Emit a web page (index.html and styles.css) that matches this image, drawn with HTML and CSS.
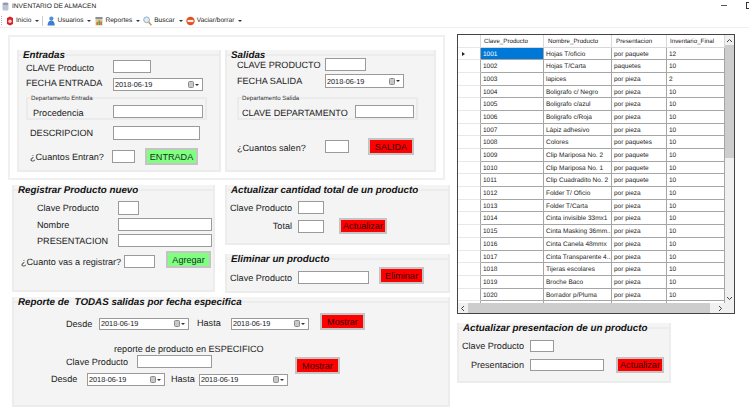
FILE: index.html
```html
<!DOCTYPE html>
<html lang="en">
<head>
<meta charset="UTF-8">
<meta name="viewport" content="width=device-width, initial-scale=1.0">
<title>INVENTARIO DE ALMACEN</title>
<link rel="stylesheet" href="styles.css">
</head>
<body>
<div class="titlebar">
    <svg class="app-icon" width="7" height="9" viewBox="0 0 7 9"><rect x="0.5" y="1" width="6" height="7.5" rx="1.5" fill="#b9c2d4"/><ellipse cx="3.5" cy="1.8" rx="3" ry="1.3" fill="#8d99b3"/></svg>
    <span class="app-name">INVENTARIO DE ALMACEN</span>
    <span class="win-min"></span>
    <span class="win-max"></span>
</div>
<div class="toolbar">
    <span class="grip"></span>
    <div class="tool tool-inicio">
        <svg width="8" height="10" viewBox="0 0 8 10"><path d="M1 2 L4 0.5 L7 2 V8 L4 9.5 L1 8 Z" fill="#d8222a"/><circle cx="4" cy="5.2" r="1.7" fill="#f7c9c9"/></svg>
        <span>Inicio</span><i class="caret"></i>
    </div>
    <span class="tool-sep"></span>
    <div class="tool tool-usuarios">
        <svg width="8" height="10" viewBox="0 0 8 10"><circle cx="4.4" cy="2.5" r="2.1" fill="#4f8fdc"/><path d="M0.5 9.5 C0.8 5.5 2.5 4.5 4.4 4.5 C6.3 4.5 7.6 6 7.8 9.5 Z" fill="#3f7fd0"/></svg>
        <span>Usuarios</span><i class="caret"></i>
    </div>
    <div class="tool tool-reportes">
        <svg width="8" height="10" viewBox="0 0 8 10"><rect x="0.5" y="1.5" width="7" height="8" fill="#d9c9a0"/><rect x="0.5" y="1" width="7" height="2" fill="#8a8f99"/><rect x="1.5" y="6" width="1.5" height="3" fill="#d5702a"/><rect x="3.5" y="4.5" width="1.5" height="4.5" fill="#6f9a3c"/><rect x="5.5" y="5.5" width="1.2" height="3.5" fill="#b9503a"/></svg>
        <span>Reportes</span><i class="caret"></i>
    </div>
    <div class="tool tool-buscar">
        <svg width="9" height="10" viewBox="0 0 9 10"><circle cx="3.6" cy="3.8" r="2.9" fill="#dcecf8" stroke="#8fa6ba" stroke-width="0.9"/><path d="M5.6 6 L8.4 9.2" stroke="#c49a5a" stroke-width="1.6"/></svg>
        <span>Buscar</span><i class="caret"></i>
    </div>
    <div class="tool tool-vaciar">
        <svg width="9" height="10" viewBox="0 0 9 10"><circle cx="4.5" cy="5" r="4.2" fill="#e2501f"/><rect x="1.6" y="3.9" width="5.8" height="2.2" fill="#fbeee8"/></svg>
        <span>Vaciar/borrar</span><i class="caret"></i>
    </div>
</div>

<div class="main">
    <div class="left">
        <div class="panel-top">
            <div class="group entradas">
                <h3 class="group-title">Entradas</h3>
                <div class="row ent-clave"><label class="lab-87 low-3">CLAVE Producto</label><input class="w-38 h-13"></div>
                <div class="row ent-fecha"><label class="lab-87 up-3">FECHA ENTRADA</label>
                    <div class="date w-90 h-13">2018-06-19<span class="date-btn"><svg width="6" height="7" viewBox="0 0 6 7"><rect x="0.5" y="0.5" width="5" height="6" rx="1" fill="#c8c8c8" stroke="#8c8c8c"/></svg><i class="caret"></i></span></div>
                </div>
                <div class="subgroup ent-depto">
                    <h4 class="sub-title">Departamento Entrada</h4>
                    <div class="row sub-row ent-proc"><label class="lab-80 low-2">Procedencia</label><input class="w-90 h-13"></div>
                </div>
                <div class="row ent-desc"><label class="lab-83">DESCRIPCION</label><input class="w-87 h-14"></div>
                <div class="row ent-cuantos"><label class="lab-82">¿Cuantos Entran?</label><input class="w-23 h-13"><button class="btn btn-green ent-btn">ENTRADA</button></div>
            </div>
            <div class="group salidas">
                <h3 class="group-title">Salidas</h3>
                <div class="row sal-clave"><label class="lab-88">CLAVE PRODUCTO</label><input class="w-41 h-13"></div>
                <div class="row sal-fecha"><label class="lab-88">FECHA SALIDA</label>
                    <div class="date w-79 h-14">2018-06-19<span class="date-btn"><svg width="6" height="7" viewBox="0 0 6 7"><rect x="0.5" y="0.5" width="5" height="6" rx="1" fill="#c8c8c8" stroke="#8c8c8c"/></svg><i class="caret"></i></span></div>
                </div>
                <div class="subgroup sal-depto">
                    <h4 class="sub-title">Departamento Salida</h4>
                    <div class="row sub-row sal-dep-row"><label class="lab-113 low-2">CLAVE DEPARTAMENTO</label><input class="w-59 h-13"></div>
                </div>
                <div class="row sal-cuantos"><label class="lab-88 low-3">¿Cuantos salen?</label><input class="w-24 h-13"><button class="btn btn-red sal-btn">SALIDA</button></div>
            </div>
        </div>

        <div class="mid">
            <div class="group registrar">
                <h3 class="group-title">Registrar Producto nuevo</h3>
                <div class="row reg-clave"><label class="lab-81">Clave Producto</label><input class="w-21 h-14"></div>
                <div class="row reg-nombre"><label class="lab-81">Nombre</label><input class="w-94 h-13"></div>
                <div class="row reg-pres"><label class="lab-81">PRESENTACION</label><input class="w-94 h-13"></div>
                <div class="row reg-cuanto"><label class="lab-103 drop">¿Cuanto vas a registrar?</label><input class="w-31 h-13 drop"><button class="btn btn-green reg-btn">Agregar</button></div>
            </div>
            <div class="mid-right">
                <div class="group actualizar">
                    <h3 class="group-title">Actualizar cantidad total de un producto</h3>
                    <div class="row act-clave"><label class="lab-right">Clave Producto</label><input class="w-26 h-13"></div>
                    <div class="row act-total"><label class="lab-right">Total</label><input class="w-26 h-13"><button class="btn btn-red act-btn">Actualizar</button></div>
                </div>
                <div class="group eliminar">
                    <h3 class="group-title">Eliminar un producto</h3>
                    <div class="row eli-row"><label class="lab-right drop">Clave Producto</label><input class="w-71 h-13 drop"><button class="btn btn-red eli-btn">Eliminar</button></div>
                </div>
            </div>
        </div>

        <div class="group reporte">
            <h3 class="group-title">Reporte de &nbsp;TODAS salidas por fecha especifica</h3>
            <div class="row rep-fechas">
                <label class="lab-33 drop">Desde</label>
                <div class="date w-90 h-12 drop">2018-06-19<span class="date-btn"><svg width="6" height="7" viewBox="0 0 6 7"><rect x="0.5" y="0.5" width="5" height="6" rx="1" fill="#c8c8c8" stroke="#8c8c8c"/></svg><i class="caret"></i></span></div>
                <label class="lab-34 rep-hasta low-3">Hasta</label>
                <div class="date w-78 h-12 drop">2018-06-19<span class="date-btn"><svg width="6" height="7" viewBox="0 0 6 7"><rect x="0.5" y="0.5" width="5" height="6" rx="1" fill="#c8c8c8" stroke="#8c8c8c"/></svg><i class="caret"></i></span></div>
                <button class="btn btn-red rep-btn">Mostrar</button>
            </div>
            <p class="rep-note">reporte de producto en ESPECIFICO</p>
            <div class="row rep-clave"><label class="lab-71 low-2">Clave Producto</label><input class="w-75 h-13"><button class="btn btn-red rep-btn2">Mostrar</button></div>
            <div class="row rep-fechas2">
                <label class="lab-36 up-2">Desde</label>
                <div class="date w-78 h-13">2018-06-19<span class="date-btn"><svg width="6" height="7" viewBox="0 0 6 7"><rect x="0.5" y="0.5" width="5" height="6" rx="1" fill="#c8c8c8" stroke="#8c8c8c"/></svg><i class="caret"></i></span></div>
                <label class="lab-28 rep-hasta2 up-2">Hasta</label>
                <div class="date w-89 h-12">2018-06-19<span class="date-btn"><svg width="6" height="7" viewBox="0 0 6 7"><rect x="0.5" y="0.5" width="5" height="6" rx="1" fill="#c8c8c8" stroke="#8c8c8c"/></svg><i class="caret"></i></span></div>
            </div>
        </div>
    </div>

    <div class="right">
        <div class="dgrid">
            <div class="dgrid-body">
                <div class="drow dhead"><div></div><div>Clave_Producto</div><div class="pad-name">Nombre_Producto</div><div class="pad-pres">Presentacion</div><div>Inventario_Final</div></div>
                <div class="drow active"><div><i class="row-arrow"></i></div><div>1001</div><div>Hojas T/oficio</div><div>por paquete</div><div>12</div></div>
                <div class="drow"><div></div><div>1002</div><div>Hojas T/Carta</div><div>paquetes</div><div>10</div></div>
                <div class="drow"><div></div><div>1003</div><div>lapices</div><div>por pieza</div><div>2</div></div>
                <div class="drow"><div></div><div>1004</div><div>Boligrafo c/ Negro</div><div>por pieza</div><div>10</div></div>
                <div class="drow"><div></div><div>1005</div><div>Boligrafo c/azul</div><div>por pieza</div><div>10</div></div>
                <div class="drow"><div></div><div>1006</div><div>Boligrafo c/Roja</div><div>por pieza</div><div>10</div></div>
                <div class="drow"><div></div><div>1007</div><div>Lápiz adhesivo</div><div>por pieza</div><div>10</div></div>
                <div class="drow"><div></div><div>1008</div><div>Colores</div><div>por paquetes</div><div>10</div></div>
                <div class="drow"><div></div><div>1009</div><div>Clip Mariposa No. 2</div><div>por paquete</div><div>10</div></div>
                <div class="drow"><div></div><div>1010</div><div>Clip Mariposa No. 1</div><div>por paquete</div><div>10</div></div>
                <div class="drow"><div></div><div>1011</div><div>Clip Cuadradito No. 2</div><div>por paquete</div><div>10</div></div>
                <div class="drow"><div></div><div>1012</div><div>Folder T/ Oficio</div><div>por pieza</div><div>10</div></div>
                <div class="drow"><div></div><div>1013</div><div>Folder T/Carta</div><div>por pieza</div><div>10</div></div>
                <div class="drow"><div></div><div>1014</div><div>Cinta invisible 33mx1</div><div>por pieza</div><div>10</div></div>
                <div class="drow"><div></div><div>1015</div><div>Cinta Masking 36mm...</div><div>por pieza</div><div>10</div></div>
                <div class="drow"><div></div><div>1016</div><div>Cinta Canela 48mmx</div><div>por pieza</div><div>10</div></div>
                <div class="drow"><div></div><div>1017</div><div>Cinta Transparente 4...</div><div>por pieza</div><div>10</div></div>
                <div class="drow"><div></div><div>1018</div><div>Tijeras escolares</div><div>por pieza</div><div>10</div></div>
                <div class="drow"><div></div><div>1019</div><div>Broche Baco</div><div>por pieza</div><div>10</div></div>
                <div class="drow"><div></div><div>1020</div><div>Borrador p/Pluma</div><div>por pieza</div><div>10</div></div>
                <div class="drow"><div></div><div></div><div></div><div></div><div></div></div>
            </div>
            <div class="vscroll">
                <svg class="arrow-up" width="7" height="5" viewBox="0 0 7 5"><path d="M1 4 L3.5 1.5 L6 4" fill="none" stroke="#444" stroke-width="1"/></svg>
                <div class="vthumb"></div>
                <svg class="arrow-down" width="7" height="5" viewBox="0 0 7 5"><path d="M1 1 L3.5 3.5 L6 1" fill="none" stroke="#444" stroke-width="1"/></svg>
            </div>
            <div class="hscroll">
                <svg width="5" height="7" viewBox="0 0 5 7"><path d="M4 1 L1.5 3.5 L4 6" fill="none" stroke="#444" stroke-width="1"/></svg>
                <div class="hthumb"></div>
                <svg width="5" height="7" viewBox="0 0 5 7"><path d="M1 1 L3.5 3.5 L1 6" fill="none" stroke="#444" stroke-width="1"/></svg>
            </div>
            <div class="corner"></div>
        </div>
        <div class="group presentacion">
            <h3 class="group-title">Actualizar presentacion de un producto</h3>
            <div class="row pre-clave"><label class="lab-right">Clave Producto</label><input class="w-24 h-12"></div>
            <div class="row pre-pres"><label class="lab-right">Presentacion</label><input class="w-74 h-12"><button class="btn btn-red pre-btn">Actualizar</button></div>
        </div>
    </div>
</div>
</body>
</html>
```

FILE: styles.css
```css
* {
    box-sizing: border-box;
}

body {
    margin: 0;
    width: 749px;
    height: 407px;
    overflow: hidden;
    background-color: #fff;
    font-family: "Liberation Sans", Arial, sans-serif;
    font-size: 9.1px;
    color: #222;
    text-rendering: geometricPrecision;
}

/* title bar and toolbar */
.titlebar {
    display: flex;
    align-items: center;
    height: 13px;
    padding-left: 2px;
}

.app-name {
    margin-left: 3px;
    font-size: 6.6px;
}

.win-min {
    margin-left: auto;
    width: 6px;
    height: 1px;
    margin-top: -3px;
    background-color: #555;
}

.win-max {
    width: 8px;
    height: 7px;
    margin-left: 19px;
    margin-right: -5px;
    margin-top: -2px;
    border: 1px solid #333;
}

.toolbar {
    display: flex;
    align-items: center;
    height: 15px;
    padding-top: 1px;
    border-bottom: 1px solid #f0f0f0;
    font-size: 6.6px;
}

.grip {
    width: 1px;
    height: 9px;
    margin-left: 1px;
    border-left: 1px dotted #aaa;
}

.tool {
    display: flex;
    align-items: center;
}

.tool span {
    margin-left: 2px;
}

.tool-inicio {
    margin-left: 4px;
}

.tool-sep {
    width: 1px;
    height: 10px;
    margin-left: 3px;
    background-color: #ccc;
}

.tool-usuarios, .tool-reportes {
    margin-left: 4px;
}

.tool-buscar, .tool-vaciar {
    margin-left: 3px;
}

.caret {
    display: inline-block;
    width: 0;
    height: 0;
    margin-left: 4px;
    border-left: 2px solid transparent;
    border-right: 2px solid transparent;
    border-top: 2px solid #333;
}

/* layout */
.main {
    display: flex;
    padding: 7px 0 0 8px;
}

.left {
    width: 442px;
}

.right {
    margin-left: 7px;
    margin-top: -1px;
}

.panel-top {
    display: flex;
    gap: 4px;
    width: 437px;
    height: 145px;
    padding: 13px 0 0 7px;
    border: 2px solid #f0f0f0;
}

.mid {
    display: flex;
    margin: 5px 0 0 4px;
    gap: 10px;
}

.mid-right {
    display: flex;
    flex-direction: column;
    gap: 9px;
}

/* group boxes */
.group {
    background-color: #f4f4f4;
    border: 2px solid #ececec;
    border-top: 0;
}

.group-title {
    display: flex;
    align-items: center;
    height: 10px;
    margin: 0 -2px;
    padding-left: 6px;
    font-size: 9.8px;
    font-weight: bold;
    font-style: italic;
    color: #111;
    white-space: nowrap;
}

.group-title::after {
    content: "";
    flex: 1;
    height: 2px;
    background-color: #ececec;
}

.group-title::before {
    content: "";
    width: 6px;
    height: 2px;
    margin-left: -6px;
    background-color: #ececec;
}

.subgroup {
    display: flow-root;
    width: 181px;
    height: 23px;
    border: 2px solid #ebebeb;
    border-top: 0;
}

.sub-title {
    display: flex;
    align-items: center;
    height: 6px;
    margin: -2px -2px 0;
    font-size: 6.1px;
    font-weight: normal;
    color: #333;
    white-space: nowrap;
}

.sub-title::before {
    content: "";
    width: 5px;
    height: 2px;
    background-color: #ebebeb;
}

.sub-title::after {
    content: "";
    flex: 1;
    height: 2px;
    background-color: #ebebeb;
}

.row {
    display: flex;
    align-items: center;
}

.row label {
    white-space: nowrap;
}

.drop {
    margin-top: 4px;
}

.low-2 {
    margin-top: 2px;
}

.low-3 {
    margin-top: 3px;
}

.up-2 {
    margin-top: -2px;
}

.up-3 {
    margin-top: -3px;
}

/* controls */
input {
    padding: 0;
    background-color: #fff;
    border: 1px solid #9a9a9a;
}

.date {
    display: flex;
    align-items: center;
    justify-content: space-between;
    padding: 0 3px 0 1px;
    background-color: #fff;
    border: 1px solid #9a9a9a;
    font-size: 7.3px;
}

.date-btn {
    display: flex;
    align-items: center;
}

.date-btn .caret {
    margin-left: 1px;
}

.btn {
    padding: 0;
    border: 2px solid #c4c4c4;
    font-family: inherit;
    font-size: 9.1px;
    color: #300;
}

.btn-red {
    background-color: #f00;
}

.btn-green {
    background-color: #80ff80;
    color: #132;
}

.w-21 { width: 21px; }
.w-23 { width: 23px; }
.w-24 { width: 24px; }
.w-26 { width: 26px; }
.w-31 { width: 31px; }
.w-38 { width: 38px; }
.w-41 { width: 41px; }
.w-59 { width: 59px; }
.w-71 { width: 71px; }
.w-74 { width: 74px; }
.w-75 { width: 75px; }
.w-78 { width: 78px; }
.w-79 { width: 79px; }
.w-87 { width: 87px; }
.w-89 { width: 89px; }
.w-90 { width: 90px; }
.w-94 { width: 94px; }
.h-12 { height: 12px; }
.h-13 { height: 13px; }
.h-14 { height: 14px; }

.lab-28 { width: 28px; }
.lab-33 { width: 33px; }
.lab-34 { width: 34px; }
.lab-36 { width: 36px; }
.lab-71 { width: 71px; }
.lab-80 { width: 80px; }
.lab-81 { width: 81px; }
.lab-82 { width: 82px; }
.lab-83 { width: 83px; }
.lab-87 { width: 87px; }
.lab-88 { width: 88px; }
.lab-103 { width: 103px; }
.lab-113 { width: 113px; }

.lab-right {
    width: 68px;
    padding-right: 6px;
    text-align: right;
}

/* entradas */
.entradas {
    width: 204px;
    height: 122px;
}

.ent-clave { margin-left: 7px; }
.ent-fecha { margin: 5px 0 0 7px; }
.ent-depto { margin: 6px 0 0 7px; }
.sub-row { margin-top: 4px; }
.ent-proc { margin-left: 5px; }
.ent-desc { margin: 6px 0 0 11px; }
.ent-cuantos { margin: 8px 0 0 11px; }
.ent-btn { width: 53px; height: 17px; margin-left: 10px; }

/* salidas */
.salidas {
    width: 211px;
    height: 122px;
}

.sal-clave { margin: -2px 0 0 10px; }
.sal-fecha { margin: 3px 0 0 10px; }
.sal-depto { margin: 9px 0 0 10px; }
.sal-dep-row { margin-left: 3px; }
.sal-cuantos { margin: 18px 0 0 10px; }
.sal-btn { width: 46px; height: 17px; margin-left: 19px; }

/* registrar */
.registrar {
    width: 203px;
    height: 107px;
}

.reg-clave { margin: 6px 0 0 23px; }
.reg-nombre { margin: 3px 0 0 23px; }
.reg-pres { margin: 3px 0 0 23px; }
.reg-cuanto { margin: 4px 0 0 7px; }
.reg-btn { width: 45px; height: 17px; margin-left: 11px; }

/* actualizar y eliminar */
.actualizar {
    width: 225px;
    height: 60px;
}

.act-clave { margin: 6px 0 0 3px; }
.act-total { margin: 4px 0 0 3px; }
.act-btn { width: 48px; height: 16px; margin-left: 15px; }

.eliminar {
    width: 225px;
    height: 39px;
}

.eli-row { margin: 3px 0 0 3px; }
.eli-btn { width: 45px; height: 17px; margin-left: 10px; }

/* reporte */
.reporte {
    width: 438px;
    height: 110px;
    margin: 4px 0 0 4px;
}

.rep-fechas { margin: 6px 0 0 52px; }
.rep-hasta { margin-left: 8px; }
.rep-btn { width: 45px; height: 17px; margin-left: 11px; }

.rep-note {
    height: 11px;
    margin: 14px 0 0 100px;
    line-height: 11px;
}

.rep-clave { margin-left: 52px; align-items: flex-start; height: 18px; }
.rep-btn2 { width: 45px; height: 17px; margin: 2px 0 0 83px; }
.rep-fechas2 { margin: 0 0 0 37px; }
.rep-hasta2 { margin-left: 6px; }

/* data grid */
.dgrid {
    display: grid;
    grid-template-columns: 267px 9px;
    grid-template-rows: 268px 10px;
    width: 278px;
    height: 280px;
    border: 1px solid #444;
}

.dgrid-body {
    overflow: hidden;
    font-size: 6.5px;
}

.drow {
    display: grid;
    grid-template-columns: 23px 63px 68px 55px 58px;
    height: 12.7px;
    line-height: 13px;
}

.drow > div {
    padding-left: 2px;
    border-right: 1px solid #a6a6a6;
    border-bottom: 1px solid #a6a6a6;
    white-space: nowrap;
    overflow: hidden;
}

.drow > div:first-child {
    padding: 0;
    border-bottom-color: #e8e8e8;
}

.dhead {
    height: 12.5px;
    font-size: 6.2px;
}

.dhead > div {
    padding-left: 3px;
    border-right-color: #d8d8d8;
    border-bottom-color: #d8d8d8;
}

.dhead .pad-name { padding-left: 4px; }
.dhead .pad-pres { padding-left: 4px; }

.active > div:nth-child(2) {
    background-color: #0078d7;
    color: #fff;
}

.row-arrow {
    display: block;
    width: 0;
    height: 0;
    margin: 4px 0 0 4px;
    border-top: 2px solid transparent;
    border-bottom: 2px solid transparent;
    border-left: 3px solid #222;
}

.vscroll {
    display: flex;
    flex-direction: column;
    align-items: center;
    justify-content: flex-start;
    background-color: #f0f0f0;
}

.arrow-up {
    margin-top: 3px;
    flex: none;
}

.vthumb {
    width: 100%;
    height: 113px;
    margin-top: 2px;
    background-color: #cdcdcd;
}

.arrow-down {
    margin-top: auto;
    margin-bottom: 2px;
    flex: none;
}

.hscroll {
    display: flex;
    align-items: center;
    padding: 0 2px;
    background-color: #f0f0f0;
}

.hthumb {
    width: 242px;
    height: 100%;
    margin: 0 8px 0 3px;
    background-color: #cdcdcd;
}

.corner {
    background-color: #f0f0f0;
}

/* presentacion */
.presentacion {
    width: 214px;
    height: 60px;
    margin-top: 9px;
}

.pre-clave { margin: 7px 0 0 3px; }
.pre-pres { margin: 5px 0 0 3px; }
.pre-btn { width: 48px; height: 16px; margin-left: 12px; }
```
